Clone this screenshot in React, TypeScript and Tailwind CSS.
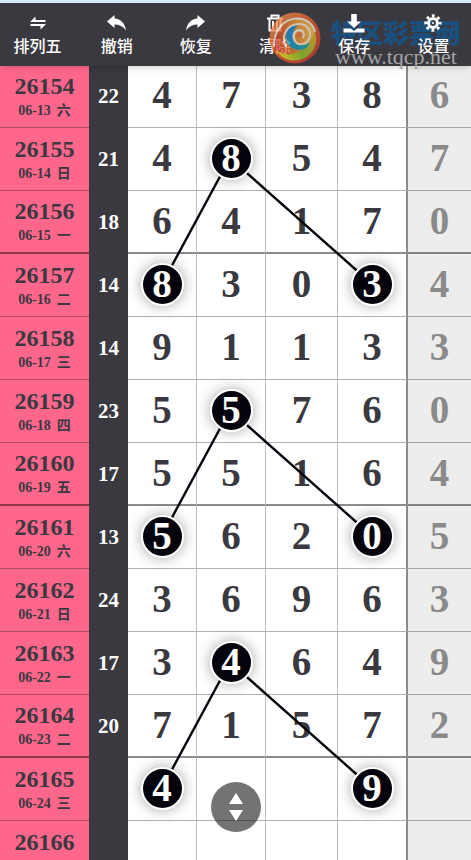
type Draw = {
  issue: string;
  date: string;
  day: string;
  sum?: number;
  digits: string;
  picks?: number[];
};

// a pick is the column index of a marked digit
const draws: Draw[] = [
  { issue: "26154", date: "06-13", day: "六", sum: 22, digits: "47386" },
  { issue: "26155", date: "06-14", day: "日", sum: 21, digits: "48547", picks: [1] },
  { issue: "26156", date: "06-15", day: "一", sum: 18, digits: "64170" },
  { issue: "26157", date: "06-16", day: "二", sum: 14, digits: "83034", picks: [0, 3] },
  { issue: "26158", date: "06-17", day: "三", sum: 14, digits: "91133" },
  { issue: "26159", date: "06-18", day: "四", sum: 23, digits: "55760", picks: [1] },
  { issue: "26160", date: "06-19", day: "五", sum: 17, digits: "55164" },
  { issue: "26161", date: "06-20", day: "六", sum: 13, digits: "56205", picks: [0, 3] },
  { issue: "26162", date: "06-21", day: "日", sum: 24, digits: "36963" },
  { issue: "26163", date: "06-22", day: "一", sum: 17, digits: "34649", picks: [1] },
  { issue: "26164", date: "06-23", day: "二", sum: 20, digits: "71572" },
  { issue: "26165", date: "06-24", day: "三", digits: "4  9 ", picks: [0, 3] },
  { issue: "26166", date: "06-25", day: "四", digits: "     " },
];

const ROW = 63;
const TOTAL = 471;
const centers = [162, 230, 301, 372];

const SwapIcon = () => (
  <svg viewBox="0 0 16 14" className="h-[14px] w-4" fill="currentColor">
    <path d="M0 6 5.5.5V4H15.5V6ZM16 8 10.5 13.5V10H.5V8Z" />
  </svg>
);

const UndoIcon = () => (
  <svg viewBox="0 0 19 16" className="h-4 w-[19px]" fill="currentColor">
    <path d="M0 6.5 7.5 0V3.4C13.5 3.8 18 8 19 15.5 16 11.5 12.5 9.6 7.5 9.6V13Z" />
  </svg>
);

const RedoIcon = () => (
  <svg viewBox="0 0 19 16" className="h-4 w-[19px]" fill="currentColor">
    <path d="M19 6.5 11.5 0V3.4C5.5 3.8 1 8 0 15.5 3 11.5 6.5 9.6 11.5 9.6V13Z" />
  </svg>
);

const TrashIcon = () => (
  <svg viewBox="0 0 18 18" className="size-[18px]" fill="none" stroke="currentColor" strokeWidth="2">
    <path d="M1 4.5h16M5.5 4V1.5h7V4M3.5 5v11.5h11V5M7 7v8M11 7v8" />
  </svg>
);

const SaveIcon = () => (
  <svg viewBox="0 0 22 19" className="h-[19px] w-[22px]" fill="currentColor">
    <path d="M8.2 0h5.6v7.5H18L11 14 4 7.5h4.2Z" />
    <path d="M.5 14.6h7.3L11 17l3.2-2.4h7.3V18.5H.5Z" />
  </svg>
);

const GearIcon = () => (
  <svg viewBox="0 0 18 18" className="size-[18px]" fill="none" stroke="currentColor">
    <circle cx="9" cy="9" r="4.4" strokeWidth="3" />
    <circle cx="9" cy="9" r="7.2" strokeWidth="3" strokeDasharray="2.8 2.855" strokeDashoffset="1.4" />
    <circle cx="9" cy="9" r="1" fill="currentColor" stroke="none" />
  </svg>
);

const tools = [
  { label: "排列五", icon: <SwapIcon /> },
  { label: "撤销", icon: <UndoIcon /> },
  { label: "恢复", icon: <RedoIcon /> },
  { label: "清除", icon: <TrashIcon /> },
  { label: "保存", icon: <SaveIcon /> },
  { label: "设置", icon: <GearIcon /> },
];

const Swirl = () => (
  <svg viewBox="0 0 52 52" className="relative z-20 size-[52px] shrink-0 opacity-75">
    <defs>
      <linearGradient id="ring" x1="0" y1="0" x2="1" y2="1">
        <stop offset="0" stopColor="#f5a060" />
        <stop offset="0.4" stopColor="#f06a30" />
        <stop offset="1" stopColor="#c8302a" />
      </linearGradient>
      <linearGradient id="band" x1="0" y1="0.5" x2="1" y2="0.3">
        <stop offset="0" stopColor="#d83c2c" />
        <stop offset="0.5" stopColor="#f0902c" />
        <stop offset="1" stopColor="#ffc850" />
      </linearGradient>
      <linearGradient id="leaf" x1="0" y1="0.4" x2="1" y2="0">
        <stop offset="0" stopColor="#f8e020" />
        <stop offset="0.4" stopColor="#90c828" />
        <stop offset="1" stopColor="#f0b030" />
      </linearGradient>
      <linearGradient id="sea" x1="0" y1="0" x2="1" y2="1">
        <stop offset="0" stopColor="#1c88e0" />
        <stop offset="1" stopColor="#18b0a8" />
      </linearGradient>
    </defs>
    <circle cx="26" cy="26" r="25.5" fill="url(#ring)" />
    <path d="M5 36C4 18 14 8 28 7c11 0 18 8 18 18 0 12-8 21-20 21-9 0-17-4-21-10Z" fill="url(#band)" />
    <path d="M7 38c9 7 23 5 31-4 5-6 8-12 6-18 6 10 3 21-4 27-10 9-26 7-33-5Z" fill="url(#leaf)" />
    <path d="M5 35C5 17 15 7 28 6.5c9 0 16 5 18 13.5" fill="none" stroke="#fff2e0" strokeWidth="2" />
    <path d="M29 13c-8 0-12 6-12 12 0 8 6 13 13 13 6 0 10-3 11-8-5 5-12 4-15-1-3-6-2-12 3-16Z" fill="url(#sea)" />
    <path d="M17 34C11 23 19 12 30 12c9 0 13 8 10 15-3 6-11 7-14 2" fill="none" stroke="#fff0d8" strokeWidth="2" strokeLinecap="round" />
    <path d="M26 29c-3-5-1-10 4-11 4 0 6 4 4 7" fill="none" stroke="#fff0d8" strokeWidth="2.4" strokeLinecap="round" />
    <circle cx="30.5" cy="23" r="3" fill="#f28238" />
  </svg>
);

function Watermark() {
  return (
    <div className="pointer-events-none absolute right-[10px] top-[6px] flex items-center gap-[10px] whitespace-nowrap">
      <Swirl />
      <div className="flex flex-col items-center pt-2">
        <span className="font-['Noto_Sans_CJK_SC',sans-serif] text-[26px] font-black leading-[30px] text-[#1a5080]">
          特区彩票网
        </span>
        <span className="font-['Liberation_Serif',serif] text-[22px] leading-5 text-[#a4a4a7]">
          www.tqcp.net
        </span>
      </div>
    </div>
  );
}

function Toolbar() {
  return (
    <header className="relative z-30 flex h-[66px] justify-between border-t-3 border-[#d3ebf8] bg-[#3a393f] text-white shadow-md">
      {tools.map((tool) => (
        <button key={tool.label} type="button" className="relative z-10 flex w-[75px] flex-col items-center pt-2">
          <span className="flex h-6 items-center">{tool.icon}</span>
          <span className="text-base font-medium leading-6">{tool.label}</span>
        </button>
      ))}
      <Watermark />
    </header>
  );
}

// joins each marked digit with the ones in the next marked row of its group
function Links() {
  const links = [];
  for (let row = 1; row < draws.length - 2; row += 4) {
    for (const from of draws[row].picks ?? []) {
      for (const to of draws[row + 2].picks ?? []) {
        links.push({ row, from, to });
      }
    }
  }
  return (
    <svg
      className="pointer-events-none absolute inset-0 z-10 h-full w-full"
      viewBox={`0 0 ${TOTAL} ${ROW * draws.length}`}
      preserveAspectRatio="none"
    >
      {links.map(({ row, from, to }) => (
        <line
          key={`${row}-${to}`}
          x1={centers[from]}
          y1={ROW * row + 30}
          x2={centers[to]}
          y2={ROW * (row + 2) + 30}
          stroke="#05040c"
          strokeWidth="2.4"
          vectorEffect="non-scaling-stroke"
        />
      ))}
    </svg>
  );
}

function DrawRow({ draw, index }: { draw: Draw; index: number }) {
  const line = index % 4 === 2 ? "border-b-2 border-b-black/45" : "border-b border-b-black/30";
  return (
    <tr className="h-[63px]">
      <th scope="row" className={`bg-[#ff668c] p-0 pt-[5px] ${line}`}>
        <div className="text-2xl font-bold leading-6">{draw.issue}</div>
        <div className="flex justify-center gap-[6px] text-sm font-bold leading-[26px]">
          <span>{draw.date}</span>
          <span>{draw.day}</span>
        </div>
      </th>
      <td className="bg-[#3a393f] p-0 text-[21px] text-white">{draw.sum}</td>
      {draw.digits.split("").map((digit, col) => {
        const last = col === 4;
        const side = last ? "bg-[#ededed] text-[#8a8a8a]" : col === 3 ? "border-r-2 border-r-black/45" : "border-r border-r-black/25";
        return (
          <td key={col} className={`p-0 pb-[2px] text-[39px] leading-10 ${side} ${line}`}>
            {draw.picks?.includes(col) ? (
              <span className="relative z-20 mx-auto flex size-[43px] items-center justify-center rounded-full border-2 border-white bg-[#05040c] text-white shadow-[0_0_14px_rgba(0,0,0,0.35)]">
                {digit}
              </span>
            ) : (
              digit.trim()
            )}
          </td>
        );
      })}
    </tr>
  );
}

export default function App() {
  return (
    <div className="relative h-screen overflow-hidden bg-white font-['Liberation_Serif','Noto_Sans_CJK_SC',serif] text-[#3a393f]">
      <Toolbar />
      <main className="relative -mt-px">
        <table className="w-full table-fixed border-separate border-spacing-0 text-center font-bold">
          <colgroup>
            <col className="w-[89px]" />
            <col className="w-[39px]" />
            <col className="w-[69px]" />
            <col className="w-[69px]" />
            <col className="w-[72px]" />
            <col className="w-[70px]" />
            <col className="w-[63px]" />
          </colgroup>
          <tbody>
            {draws.map((draw, index) => (
              <DrawRow key={draw.issue} draw={draw} index={index} />
            ))}
          </tbody>
        </table>
        <Links />
      </main>
      <button
        type="button"
        aria-label="滚动"
        className="absolute bottom-7 left-1/2 z-30 flex size-[50px] -translate-x-1/2 items-center justify-center rounded-full bg-black/55 text-white"
      >
        <svg viewBox="0 0 14 28" className="h-7 w-[14px]" fill="currentColor">
          <path d="M7 0 14 11H0ZM7 28 14 17H0Z" />
        </svg>
      </button>
    </div>
  );
}
